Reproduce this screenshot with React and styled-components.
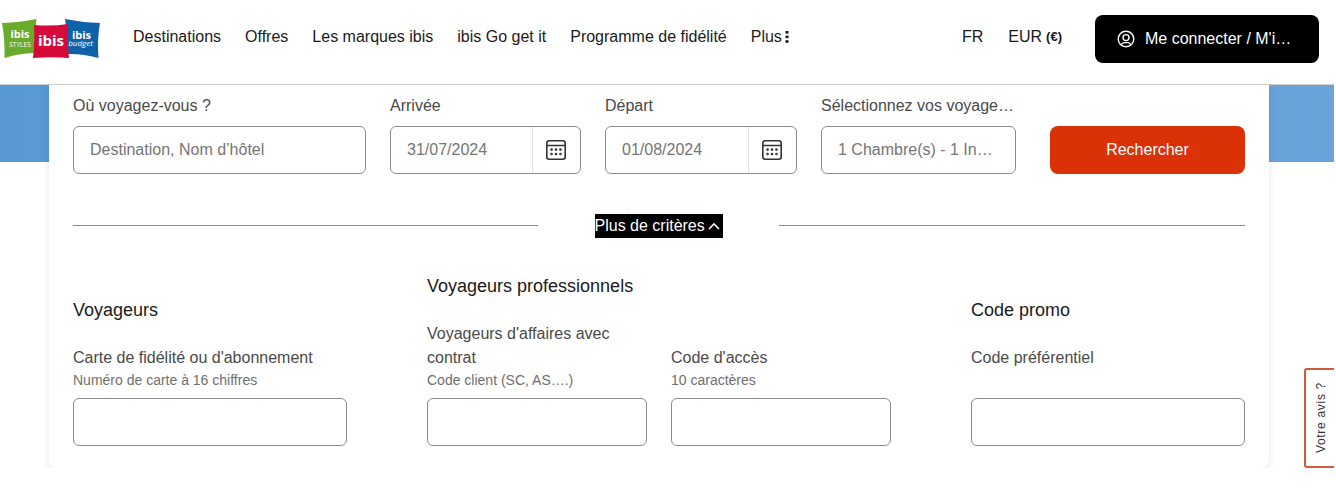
import styled, { createGlobalStyle } from "styled-components";

const GlobalStyle = createGlobalStyle`
  * { box-sizing: border-box; }
  html, body { margin: 0; background: #fff; overflow: hidden; }
  body { font-family: "Liberation Sans", Arial, sans-serif; font-size: 16px; color: #050033; }
`;

const Page = styled.div`
  width: 1334px;
`;

const Header = styled.header`
  height: 85px;
  display: flex;
  align-items: center;
  padding: 0 15px 0 2px;
  border-bottom: 1px solid #d2d2d2;
  background: #fff;
`;

const LogoWrap = styled.div`
  display: flex;
  width: 98px;
  height: 40px;
  margin-right: 33px;
  margin-top: -6px;
`;

const Nav = styled.nav`
  display: flex;
  align-items: center;
  gap: 24px;
  flex: 1;
  margin-top: -11px;
`;

const NavLink = styled.span`
  display: inline-flex;
  align-items: center;
  color: #1a1a1a;
  white-space: nowrap;
`;

const Locale = styled.div`
  display: flex;
  align-items: center;
  gap: 25px;
  margin-right: 33px;
  margin-top: -11px;
`;

const Small = styled.b`
  font-size: 13px;
  margin-left: 4px;
`;

const LoginButton = styled.button`
  width: 224px;
  height: 48px;
  margin-top: -7px;
  display: flex;
  align-items: center;
  gap: 10px;
  padding: 0 24px 0 22px;
  border: 0;
  border-radius: 8px;
  background: #000;
  color: #fff;
  font: inherit;
`;

const Hero = styled.main`
  padding: 0 65px 0 49px;
  background: linear-gradient(90deg, #5899d3, #6aa3da) no-repeat;
  background-size: 100% 77px;
`;

const Card = styled.section`
  padding: 9px 24px 22px;
  background: #fff;
  border-radius: 0 0 8px 8px;
  box-shadow: 0 2px 8px rgba(0, 0, 0, 0.1);
`;

const SearchRow = styled.div`
  display: flex;
  align-items: flex-end;
  gap: 24px;
`;

const Field = styled.div`
  width: ${({ $w }) => $w}px;
  flex: none;
`;

const Label = styled.div`
  line-height: 24px;
  color: #4a4a4a;
  margin-bottom: ${({ $mb }) => $mb || 0}px;
  white-space: ${({ $wrap }) => ($wrap ? "normal" : "nowrap")};
  overflow: hidden;
  text-overflow: ellipsis;
`;

const Hint = styled.div`
  height: 22px;
  margin-top: -1px;
  line-height: 22px;
  font-size: 14px;
  color: #6f6f6f;
  margin-bottom: 7px;
`;

const InputBox = styled.div`
  display: flex;
  height: 48px;
  border: 1px solid #8c8c8c;
  border-radius: 6px;
  background: #fff;
  overflow: hidden;
`;

const TextInput = styled.input`
  flex: 1;
  min-width: 0;
  height: 100%;
  padding: 0 ${({ $pr }) => $pr || 16}px 0 16px;
  border: 0;
  outline: 0;
  background: transparent;
  font: inherit;
  color: #757575;
  text-overflow: ellipsis;
  &::placeholder { color: #757575; opacity: 1; }
`;

const IconCell = styled.div`
  width: 48px;
  flex: none;
  display: flex;
  align-items: center;
  justify-content: center;
  border-left: 1px solid #e1e1e1;
`;

const SearchButton = styled.button`
  width: 195px;
  height: 48px;
  margin-left: 10px;
  border: 0;
  border-radius: 8px;
  background: #da3107;
  color: #fff;
  font: inherit;
`;

const DividerRow = styled.div`
  display: flex;
  align-items: center;
  justify-content: space-between;
  margin-top: 40px;
`;

const Rule = styled.div`
  width: ${({ $w }) => $w}px;
  height: 1px;
  margin-bottom: 1px;
  background: #8c8c8c;
`;

const Toggle = styled.button`
  width: 128px;
  height: 24px;
  display: flex;
  align-items: center;
  gap: 2px;
  padding: 0;
  border: 0;
  background: #000;
  color: #fff;
  font: inherit;
  white-space: nowrap;
`;

const Criteria = styled.div`
  display: flex;
  align-items: flex-end;
  gap: 80px;
  margin-top: 36px;
`;

const Group = styled.div`
  width: ${({ $w }) => $w}px;
  flex: none;
`;

const GroupTitle = styled.h3`
  margin: 0 0 24px;
  font-size: 18px;
  font-weight: 400;
  line-height: 24px;
  color: #1a1a1a;
`;

const GroupFields = styled.div`
  display: flex;
  align-items: flex-end;
  gap: 24px;
`;

const FeedbackTab = styled.button`
  position: fixed;
  right: 2px;
  top: 368px;
  width: 30px;
  height: 100px;
  display: flex;
  align-items: center;
  justify-content: center;
  padding: 0 0 0 2px;
  border: 2px solid #cf5a3c;
  border-right: 0;
  border-radius: 3px 0 0 3px;
  background: #fff;
  color: #333;
  font: 12px "Liberation Sans", Arial, sans-serif;
`;

const FeedbackText = styled.span`
  display: block;
  writing-mode: vertical-rl;
  transform: rotate(180deg);
  letter-spacing: 0.7px;
`;

function Logo() {
  return (
    <svg width="98" height="40" viewBox="0 0 98 40" aria-label="ibis">
      <path fill="#6aaa2c" d="M0 4 Q18 3.5 34.5 0 Q32 18 33 34 Q16 34.5 2.5 39 Q3 20 0 4Z" />
      <path fill="#0f62a8" d="M63 0 Q80 3.5 98 4 Q95 20 96.5 39 Q80 34.5 65 35 Q66 16 63 0Z" />
      <path fill="#d5093a" d="M32 6 Q50 7.5 66 5 Q65 20 67 39 Q50 37.5 31 39 Q33 20 32 6Z" />
      <g fill="#fff" fontFamily="'Open Sans', 'Liberation Sans', sans-serif" textAnchor="middle">
        <text x="18" y="19" fontSize="11" fontWeight="700">ibis</text>
        <text x="18" y="28" fontSize="6.6">STYLES</text>
        <text x="49" y="27" fontSize="15" fontWeight="700">ibis</text>
        <text x="79.5" y="20" fontSize="11" fontWeight="700">ibis</text>
        <text x="78.5" y="27" fontSize="8" fontStyle="italic">budget</text>
      </g>
    </svg>
  );
}

function Kebab() {
  return (
    <svg width="4" height="12" viewBox="0 0 4 12" style={{ marginLeft: 3 }}>
      <g fill="#1a1a1a">
        <rect x="0.5" y="0" width="3" height="2.6" />
        <rect x="0.5" y="4.6" width="3" height="2.6" />
        <rect x="0.5" y="9.2" width="3" height="2.6" />
      </g>
    </svg>
  );
}

function UserIcon() {
  return (
    <svg width="18" height="18" viewBox="0 0 18 18" fill="none" stroke="#fff" strokeWidth="1.4">
      <circle cx="9" cy="9" r="7.8" />
      <circle cx="9" cy="7.6" r="3" />
      <path d="M4.4 14.6 Q5 12.6 7 12.6 H11 Q13 12.6 13.6 14.6" />
    </svg>
  );
}

function CalendarIcon() {
  return (
    <svg width="20" height="20" viewBox="0 0 20 20" fill="none" style={{ marginLeft: -1 }}>
      <rect x="0.8" y="0.8" width="18.4" height="18.4" rx="2.5" stroke="#333" strokeWidth="1.6" />
      <path d="M1 5.5 H19" stroke="#333" strokeWidth="1.6" />
      <g fill="#333">
        {[5.6, 10, 14.4].map((x) =>
          [9.6, 14].map((y) => <circle key={`${x}-${y}`} cx={x} cy={y} r="1.3" />)
        )}
      </g>
    </svg>
  );
}

function ChevronUp() {
  return (
    <svg width="12" height="8" viewBox="0 0 12 8" fill="none" stroke="#fff" strokeWidth="1.6" style={{ marginLeft: 1 }}>
      <path d="M1 7 L6 2 L11 7" />
    </svg>
  );
}

const navItems = ["Destinations", "Offres", "Les marques ibis", "ibis Go get it", "Programme de fidélité"];

export default function App() {
  return (
    <Page>
      <GlobalStyle />
      <Header>
        <LogoWrap>
          <Logo />
        </LogoWrap>
        <Nav>
          {navItems.map((item) => (
            <NavLink key={item}>{item}</NavLink>
          ))}
          <NavLink>
            Plus
            <Kebab />
          </NavLink>
        </Nav>
        <Locale>
          <NavLink>FR</NavLink>
          <NavLink>
            EUR<Small>(€)</Small>
          </NavLink>
        </Locale>
        <LoginButton>
          <UserIcon />
          Me connecter / M'i…
        </LoginButton>
      </Header>
      <Hero>
        <Card>
          <SearchRow>
            <Field $w={293}>
              <Label $mb={8}>Où voyagez-vous ?</Label>
              <InputBox>
                <TextInput placeholder="Destination, Nom d’hôtel" />
              </InputBox>
            </Field>
            <Field $w={191}>
              <Label $mb={8}>Arrivée</Label>
              <InputBox>
                <TextInput defaultValue="31/07/2024" />
                <IconCell>
                  <CalendarIcon />
                </IconCell>
              </InputBox>
            </Field>
            <Field $w={192}>
              <Label $mb={8}>Départ</Label>
              <InputBox>
                <TextInput defaultValue="01/08/2024" />
                <IconCell>
                  <CalendarIcon />
                </IconCell>
              </InputBox>
            </Field>
            <Field $w={195}>
              <Label $mb={8}>Sélectionnez vos voyageurs</Label>
              <InputBox>
                <TextInput $pr={22} defaultValue="1 Chambre(s) - 1 Individu(s)" />
              </InputBox>
            </Field>
            <SearchButton>Rechercher</SearchButton>
          </SearchRow>

          <DividerRow>
            <Rule $w={465} />
            <Toggle>
              Plus de critères
              <ChevronUp />
            </Toggle>
            <Rule $w={466} />
          </DividerRow>

          <Criteria>
            <Group $w={274}>
              <GroupTitle>Voyageurs</GroupTitle>
              <Label>Carte de fidélité ou d'abonnement</Label>
              <Hint>Numéro de carte à 16 chiffres</Hint>
              <InputBox />
            </Group>
            <Group $w={464}>
              <GroupTitle>Voyageurs professionnels</GroupTitle>
              <GroupFields>
                <Field $w={220}>
                  <Label $wrap>Voyageurs d'affaires avec contrat</Label>
                  <Hint>Code client (SC, AS….)</Hint>
                  <InputBox />
                </Field>
                <Field $w={220}>
                  <Label>Code d'accès</Label>
                  <Hint>10 caractères</Hint>
                  <InputBox />
                </Field>
              </GroupFields>
            </Group>
            <Group $w={274}>
              <GroupTitle>Code promo</GroupTitle>
              <Label>Code préférentiel</Label>
              <Hint />
              <InputBox />
            </Group>
          </Criteria>
        </Card>
      </Hero>
      <FeedbackTab>
        <FeedbackText>Votre avis ?</FeedbackText>
      </FeedbackTab>
    </Page>
  );
}
